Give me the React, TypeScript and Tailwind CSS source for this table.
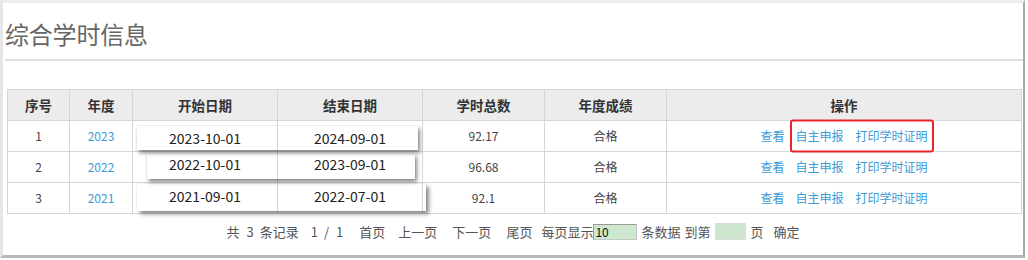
import React from "react";

const rows = [
  {
    id: "1",
    year: "2023",
    start: "2023-10-01",
    end: "2024-09-01",
    hours: "92.17",
    box: "absolute left-[4px] top-[5px] h-[24px] w-[281px] shadow-[2px_3px_4px_rgba(0,0,0,0.45),0_0_2px_rgba(0,0,0,0.12)]",
    dy: "relative top-[2px]",
    mark: true,
  },
  {
    id: "2",
    year: "2022",
    start: "2022-10-01",
    end: "2023-09-01",
    hours: "96.68",
    box: "absolute left-[14px] top-[2px] h-[25px] w-[268px] shadow-[2px_3px_4px_rgba(0,0,0,0.45),0_0_2px_rgba(0,0,0,0.12)]",
    dy: "relative top-[-3px]",
    mark: false,
  },
  {
    id: "3",
    year: "2021",
    start: "2021-09-01",
    end: "2022-07-01",
    hours: "92.1",
    box: "absolute left-[4px] top-[1px] h-[27px] w-[289px] shadow-[3px_3px_4px_rgba(0,0,0,0.45),0_0_2px_rgba(0,0,0,0.12)]",
    dy: "relative top-[-2px]",
    mark: false,
  },
];

const font = "font-['Noto_Sans_CJK_SC','Noto_Sans',sans-serif]";

export default function App() {
  return (
    <div className={`w-[1028px] h-[260px] bg-white ${font}`}>
      <div className="w-[1025px] h-[258px] border-t-[3px] border-l-[3px] border-r-[2px] border-b-[3px] border-t-[#ededed] border-l-[#e6e6e6] border-r-[#a9a9a9] border-b-[#b8b8b8] flex flex-col">
        <div className="pl-[2px] pt-[15px] h-[56px] text-[24px] leading-[32px] text-[#666] tracking-[-0.2px]">
          综合学时信息
        </div>
        <div className="ml-[2px] h-[2px] bg-[#dedede]" />
        <div className="pl-[4px] pt-[28px]">
          <table className="w-[1015px] table-fixed border-collapse border border-[#d6d6d6]">
            <colgroup>
              <col className="w-[62px]" />
              <col className="w-[63px]" />
              <col className="w-[145px]" />
              <col className="w-[145px]" />
              <col className="w-[122px]" />
              <col className="w-[122px]" />
              <col />
            </colgroup>
            <thead>
              <tr className="h-[31px] bg-[#ececec]">
                {["序号", "年度", "开始日期", "结束日期", "学时总数", "年度成绩", "操作"].map((h) => (
                  <th
                    key={h}
                    className="border border-[#d6d6d6] text-[13.5px] font-bold text-[#333] text-center p-0"
                  >
                    {h}
                  </th>
                ))}
              </tr>
            </thead>
            <tbody>
              {rows.map((r) => (
                <tr key={r.id} className="h-[31px] text-[12px] text-center">
                  <td className="border border-[#d6d6d6] text-[#444] p-0">{r.id}</td>
                  <td className="border border-[#d6d6d6] text-[#3a9ad6] p-0">{r.year}</td>
                  <td className="relative border border-[#d6d6d6] p-0">
                    <div className={r.box} />
                    <span className={`${r.dy} text-[14px] text-[#222]`}>{r.start}</span>
                  </td>
                  <td className="border border-[#d6d6d6] p-0">
                    <span className={`${r.dy} text-[14px] text-[#222]`}>{r.end}</span>
                  </td>
                  <td className="border border-[#d6d6d6] text-[#444] p-0">{r.hours}</td>
                  <td className="border border-[#d6d6d6] text-[#444] p-0">合格</td>
                  <td className="border border-[#d6d6d6] text-[#3a9ad6] p-0">
                    <span className="inline-flex items-center">
                      <span>查看</span>
                      <span className="relative ml-[11px] inline-flex items-center">
                        <span>自主申报</span>
                        <span className="ml-[12px]">打印学时证明</span>
                        {r.mark && (
                          <span className="absolute left-[-5px] right-[-6px] top-1/2 h-[33px] -translate-y-1/2 border-2 border-[#e8262a] rounded-[3px]" />
                        )}
                      </span>
                    </span>
                  </td>
                </tr>
              ))}
            </tbody>
          </table>
        </div>
        <div className="mt-[9px] flex items-center justify-center text-[13px] leading-[16px] text-[#555]">
          <span>共</span>
          <span className="ml-[7px]">3</span>
          <span className="ml-[6px]">条记录</span>
          <span className="ml-[12px]">1</span>
          <span className="ml-[6px]">/</span>
          <span className="ml-[7px]">1</span>
          <span className="ml-[16px]">首页</span>
          <span className="ml-[13px]">上一页</span>
          <span className="ml-[15px]">下一页</span>
          <span className="ml-[15px]">尾页</span>
          <span className="ml-[9px]">每页显示</span>
          <span className="w-[44px] h-[16px] bg-[#cde8cd] border border-[#9a9a9a] border-r-[#c8c8c8] border-b-[#c8c8c8] text-[12px] leading-[14px] text-[#111] pl-[1px]">
            10
          </span>
          <span className="ml-[4px]">条数据</span>
          <span className="ml-[4px]">到第</span>
          <span className="ml-[5px] w-[31px] h-[17px] bg-[#cde6cd] border border-[#dcdcdc]" />
          <span className="ml-[4px]">页</span>
          <span className="ml-[10px]">确定</span>
        </div>
      </div>
    </div>
  );
}
